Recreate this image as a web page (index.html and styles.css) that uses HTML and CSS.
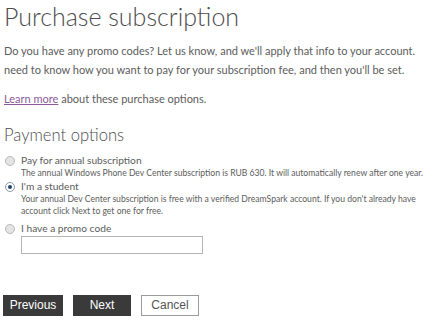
FILE: index.html
```html
<!DOCTYPE html>
<html>
<head>
	<meta charset="utf-8"/>
	<title>Purchase subscription</title>
	<link rel="stylesheet" href="styles.css">
</head>
<body>
	<div id="page">
		<h1 class="title">Purchase subscription</h1>
		<p class="intro">Do you have any promo codes? Let us know, and we'll apply that info to your account.<br>need to know how you want to pay for your subscription fee, and then you'll be set.</p>
		<p class="more"><a href="javascript:void(0)">Learn more</a> about these purchase options.</p>

		<h2 class="section">Payment options</h2>
		<ul class="options">
			<li>
				<span class="radio"></span>
				<div class="opt-body">
					<div class="opt-label">Pay for annual subscription</div>
					<div class="opt-desc">The annual Windows Phone Dev Center subscription is RUB 630. It will automatically renew after one year.</div>
				</div>
			</li>
			<li>
				<span class="radio checked"></span>
				<div class="opt-body">
					<div class="opt-label">I'm a student</div>
					<div class="opt-desc">Your annual Dev Center subscription is free with a verified DreamSpark account. If you don't already have<br>account click Next to get one for free.</div>
				</div>
			</li>
			<li>
				<span class="radio"></span>
				<div class="opt-body">
					<div class="opt-label">I have a promo code</div>
					<input type="text" class="promo" value=""/>
				</div>
			</li>
		</ul>

		<div class="actions">
			<a class="btn dark wide" href="javascript:void(0)">Previous</a>
			<a class="btn dark" href="javascript:void(0)">Next</a>
			<a class="btn light" href="javascript:void(0)">Cancel</a>
		</div>
	</div>
</body>
</html>
```

FILE: styles.css
```css
*{
	margin:0;
	padding:0;
}
body{
	background:#fff;
	font-family:Lato,"Liberation Sans",sans-serif;
	color:#5c5c5c;
}
#page{
	padding:1px 4px 0 4px;
	width:430px;
	overflow:hidden;
}
.title{
	font-weight:300;
	font-size:25px;
	line-height:30px;
	color:#4d4d4d;
}
.intro{
	margin-top:10px;
	font-size:11px;
	line-height:19px;
	white-space:nowrap;
}
.more{
	margin-top:10px;
	font-size:11px;
	line-height:19px;
}
.more a{
	color:#8b5a9a;
	text-decoration:underline;
}
.section{
	margin-top:15px;
	font-weight:300;
	font-size:16.6px;
	line-height:24px;
	color:#4d4d4d;
}
.options{
	list-style:none;
	margin-top:6px;
}
.options li{
	display:flex;
	align-items:flex-start;
}
.options li + li + li{
	margin-top:4px;
}
.radio{
	width:8px;
	height:8px;
	border:1px solid #b8b8b8;
	border-radius:50%;
	background:#e4e4e4;
	margin:3px 6px 0 1px;
	flex:none;
	display:flex;
	align-items:center;
	justify-content:center;
}
.radio.checked{
	border-color:#8a9aaa;
	background:#fff;
}
.radio.checked:after{
	content:"";
	width:4px;
	height:4px;
	border-radius:50%;
	background:#23456b;
}
.opt-label{
	font-size:10.2px;
	line-height:14px;
}
.opt-desc{
	font-size:8.6px;
	line-height:12px;
	white-space:nowrap;
}
.promo{
	display:block;
	width:182px;
	height:18px;
	box-sizing:border-box;
	border:1px solid #b5b5b5;
	margin-top:1px;
}
.actions{
	margin-top:41px;
	margin-left:-1px;
	display:flex;
	gap:10px;
}
.btn{
	display:block;
	width:58px;
	height:21px;
	box-sizing:border-box;
	text-align:center;
	line-height:21px;
	font-family:"Liberation Sans",Arial,sans-serif;
	font-size:12px;
	text-decoration:none;
}
.btn.wide{
	width:60px;
}
.btn.dark{
	background:#3a3a3a;
	color:#fff;
}
.btn.light{
	border:1px solid #9a9a9a;
	color:#555;
	line-height:19px;
}
```
